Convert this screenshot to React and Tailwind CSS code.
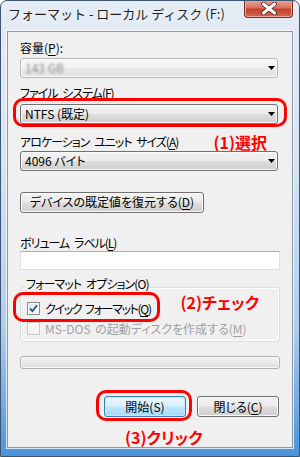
import React from 'react'

const font = "font-['Noto_Sans_CJK_JP',sans-serif]"

const Arrow = () => (
  <svg width="7" height="4" viewBox="0 0 7 4" className="mr-[2px] shrink-0">
    <path d="M0 0h7L3.5 4z" fill="#000" />
  </svg>
)

const Combo = ({ children, disabled }) => (
  <div
    className={`h-[20px] w-[258px] flex items-center rounded-[3px] border shadow-[inset_0_0_0_1px_#fafafa] ${
      disabled
        ? 'border-[#b5b8bb] bg-[linear-gradient(#f5f5f5,#f1f1f1_48%,#e9e9e9_52%,#e3e3e3)]'
        : 'border-[#707070] bg-[linear-gradient(#f2f2f2,#ebebeb_48%,#dddddd_52%,#cfcfcf)]'
    }`}
  >
    <div className="flex-1 pl-[4px] leading-[16px]">{children}</div>
    <Arrow />
  </div>
)

const Button = ({ children, primary, className = '' }) => (
  <div
    className={`h-[21px] flex items-center justify-center rounded-[3px] border leading-[16px] ${
      primary
        ? 'border-[#3c7fb1] bg-[linear-gradient(#eaf6fd,#d9f0fc_48%,#bee6fd_52%,#a7d9f5)] shadow-[inset_0_0_0_1px_#c5e8fb]'
        : 'border-[#707070] bg-[linear-gradient(#f2f2f2,#ebebeb_48%,#dddddd_52%,#cfcfcf)] shadow-[inset_0_0_0_1px_#fcfcfc]'
    } ${className}`}
  >
    {children}
  </div>
)

const Check = ({ checked, disabled }) => (
  <div
    className={`w-[13px] h-[13px] shrink-0 border flex items-center justify-center ${
      disabled ? 'border-[#c9c9c9] bg-[#f4f4f4]' : 'border-[#8e8f8f] bg-[linear-gradient(135deg,#dcdfe3,#fbfbfb)] shadow-[inset_0_0_0_1px_#f4f4f4]'
    }`}
  >
    {checked && (
      <svg width="11" height="11" viewBox="0 0 11 11">
        <path d="M2 5.5L4.4 8.2L9 2.2" fill="none" stroke="#2b4a8c" strokeWidth="1.8" />
      </svg>
    )}
  </div>
)

const Ring = ({ className }) => (
  <div className={`absolute border-[3px] border-[#ff0000] rounded-[10px] pointer-events-none ${className}`} />
)

const U = ({ children }) => <span className="underline underline-offset-2">{children}</span>

const Note = ({ children, className = '' }) => (
  <span className={`text-[16px] leading-[16px] font-bold text-[#ff0000] ${className}`}>{children}</span>
)

export default function App() {
  return (
    <div className={`${font} w-[300px] h-[457px] flex flex-col border border-[#3d5473] rounded-t-[7px] bg-[linear-gradient(180deg,#e4ecf5_0%,#d8e4f2_35%,#aecdee_72%,#4a93dc_100%)] text-[12px] text-black overflow-hidden`}>
      {/* title bar */}
      <div className="h-[30px] flex items-start shrink-0">
        <div className="pl-[7px] pt-[5px] text-[13px] leading-[16px] text-[#1e1e1e] [text-shadow:0_0_6px_#ffffff]">
          フォーマット - ローカル ディスク (F:)
        </div>
        <div className="ml-auto mr-[6px] -mt-[1px] w-[49px] h-[18px] rounded-b-[4px] border border-[#7a2b20] border-t-0 bg-[linear-gradient(#e9a99c,#d9715f_45%,#c4402c_55%,#d06a50)] flex items-center justify-center shadow-[inset_0_0_0_1px_#eea79a]">
          <svg width="16" height="13" viewBox="0 0 16 13">
            <path d="M2.5 2L13.5 11M13.5 2L2.5 11" stroke="#4a1f19" strokeWidth="4.6" strokeLinecap="round" />
            <path d="M2.5 2L13.5 11M13.5 2L2.5 11" stroke="#ffffff" strokeWidth="3" strokeLinecap="round" />
          </svg>
        </div>
      </div>

      {/* client area */}
      <div className="mx-[6px] h-[417px] shrink-0 border border-[#8b97a8] bg-[#f0f0f0] shadow-[0_0_0_1px_rgba(255,255,255,0.75)] pl-[12px] pr-[12px] flex flex-col [font-feature-settings:'palt']">
        <div className="mt-[8px] leading-[16px]">容量(<U>P</U>):</div>
        <div className="mt-[2px]">
          <Combo disabled>
            <span className="text-[#8f8f8f] blur-[1.3px]">143 GB</span>
          </Combo>
        </div>

        <div className="mt-[7px] leading-[16px] tracking-[-1px] [word-spacing:3px]">ファイル システム(<U>F</U>)</div>
        <div className="mt-[3px] relative w-fit">
          <Combo>NTFS (既定)</Combo>
          <Ring className="-left-[7px] -right-[9px] -top-[6px] -bottom-[3px]" />
        </div>

        <div className="mt-[10px] flex items-center leading-[16px]">
          <span className="tracking-[-1px] [word-spacing:3px]">アロケーション ユニット サイズ(<U>A</U>)</span>
          <Note className="ml-auto mr-[13px]">(1)選択</Note>
        </div>
        <div className="mt-[1px]">
          <Combo>4096 バイト</Combo>
        </div>

        <Button className="mt-[21px] w-[184px]">
          デバイスの既定値を復元する(<U>D</U>)
        </Button>

        <div className="mt-[22px] leading-[16px] tracking-[-1px] [word-spacing:3px]">ボリューム ラベル(<U>L</U>)</div>
        <div className="h-[20px] w-[260px] bg-white border border-[#dbdfe6] border-t-[#abadb3]" />

        {/* group box */}
        <div className="mt-[17px] w-[260px] border border-[#d5dfe5] rounded-[3px] shadow-[inset_0_0_0_1px_#ffffff] pb-[5px]">
          <div className="-mt-[12px] ml-[4px] w-fit px-[1px] bg-[#f0f0f0] leading-[16px] tracking-[-0.9px] [word-spacing:3px]">フォーマット オプション(O)</div>
          <div className="mt-[9px] relative flex items-center h-[15px] pl-[6px]">
            <Check checked />
            <span className="ml-[5px] leading-[15px] tracking-[-1.3px] [word-spacing:2px]">クイック フォーマット(<U>Q</U>)</span>
            <Note className="ml-auto mr-[20px] -mt-[13px]">(2)チェック</Note>
            <Ring className="-left-[8px] w-[147px] -top-[9px] h-[30px]" />
          </div>
          <div className="mt-[5px] flex items-center h-[15px] pl-[6px]">
            <Check disabled />
            <span className="ml-[5px] leading-[15px] text-[#a0a0a0] [word-spacing:2px]">MS-DOS の起動ディスクを作成する(<U>M</U>)</span>
          </div>
        </div>

        {/* progress */}
        <div className="mt-[14px] w-[260px] h-[13px] rounded-[3px] border border-[#b2b2b2] bg-[linear-gradient(#f4f4f4,#e9e9e9_50%,#dcdcdc)] shadow-[inset_0_0_0_1px_#f8f8f8]" />

        {/* buttons */}
        <div className="mt-[27px] flex justify-end gap-[11px] pr-[1px]">
          <div className="relative">
            <Button primary className="w-[82px]">開始(S)</Button>
            <Ring className="-left-[8px] -right-[6px] -top-[6px] -bottom-[4px]" />
          </div>
          <Button className="w-[82px]">閉じる(<U>C</U>)</Button>
        </div>

        <div className="mt-[12px] pl-[105px] leading-[16px]">
          <Note>(3)クリック</Note>
        </div>
      </div>
    </div>
  )
}
